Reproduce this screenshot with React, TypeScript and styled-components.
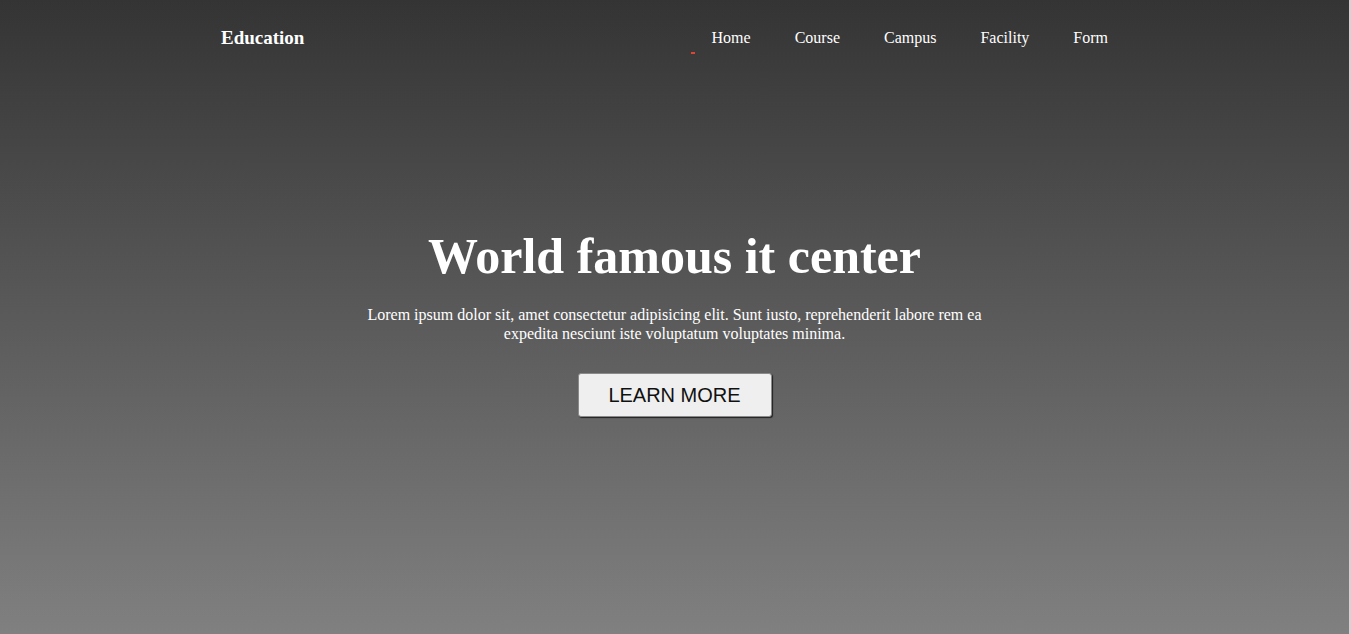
import React from "react";
import styled, { createGlobalStyle } from "styled-components";

const GlobalStyle = createGlobalStyle`
  html, body { margin: 0; padding: 0; background: #d4d4d4; }
  body { font-family: "Liberation Serif", "Times New Roman", serif; }
  * { box-sizing: border-box; }
`;

const Hero = styled.div`
  width: 1349px;
  height: 634px;
  background: linear-gradient(to bottom, #343434 0%, #808080 100%);
  display: flex;
  flex-direction: column;
`;

const Header = styled.header`
  display: flex;
  align-items: flex-start;
  justify-content: space-between;
  padding: 27px 241px 0 221px;
  height: 74px;
`;

const Logo = styled.div`
  color: #fff;
  font-weight: bold;
  font-size: 19px;
  line-height: 22px;
`;

const NavList = styled.ul`
  list-style: none;
  margin: 0;
  padding: 0;
  display: flex;
  gap: 44px;
  position: relative;
`;

const NavItem = styled.li`
  color: #fff;
  font-size: 16px;
  line-height: 22px;
`;

const Marker = styled.span`
  position: absolute;
  left: -21px;
  top: 25px;
  width: 4px;
  height: 2px;
  background: #e0452f;
`;

const Main = styled.main`
  flex: 1;
  display: flex;
  flex-direction: column;
  align-items: center;
  padding-top: 152px;
`;

const Title = styled.h1`
  margin: 0;
  color: #fff;
  font-size: 50px;
  line-height: 60px;
  font-weight: bold;
`;

const Text = styled.p`
  margin: 19px 0 0;
  width: 640px;
  text-align: center;
  color: #fff;
  font-size: 16px;
  line-height: 19px;
`;

const Button = styled.button`
  margin-top: 30px;
  width: 194px;
  height: 44px;
  background: #efefef;
  border: 1px solid #8a8a8a;
  border-radius: 3px;
  box-shadow: 1px 1px 1px #222;
  font-family: "Liberation Sans", Arial, sans-serif;
  font-size: 20px;
  color: #111;
  cursor: pointer;
`;

export default function App() {
  return (
    <>
      <GlobalStyle />
      <Hero>
        <Header>
          <Logo>Education</Logo>
          <NavList>
            <Marker />
            {["Home", "Course", "Campus", "Facility", "Form"].map((n) => (
              <NavItem key={n}>{n}</NavItem>
            ))}
          </NavList>
        </Header>
        <Main>
          <Title>World famous it center</Title>
          <Text>
            Lorem ipsum dolor sit, amet consectetur adipisicing elit. Sunt iusto,
            reprehenderit labore rem ea expedita nesciunt iste voluptatum
            voluptates minima.
          </Text>
          <Button>LEARN MORE</Button>
        </Main>
      </Hero>
    </>
  );
}
